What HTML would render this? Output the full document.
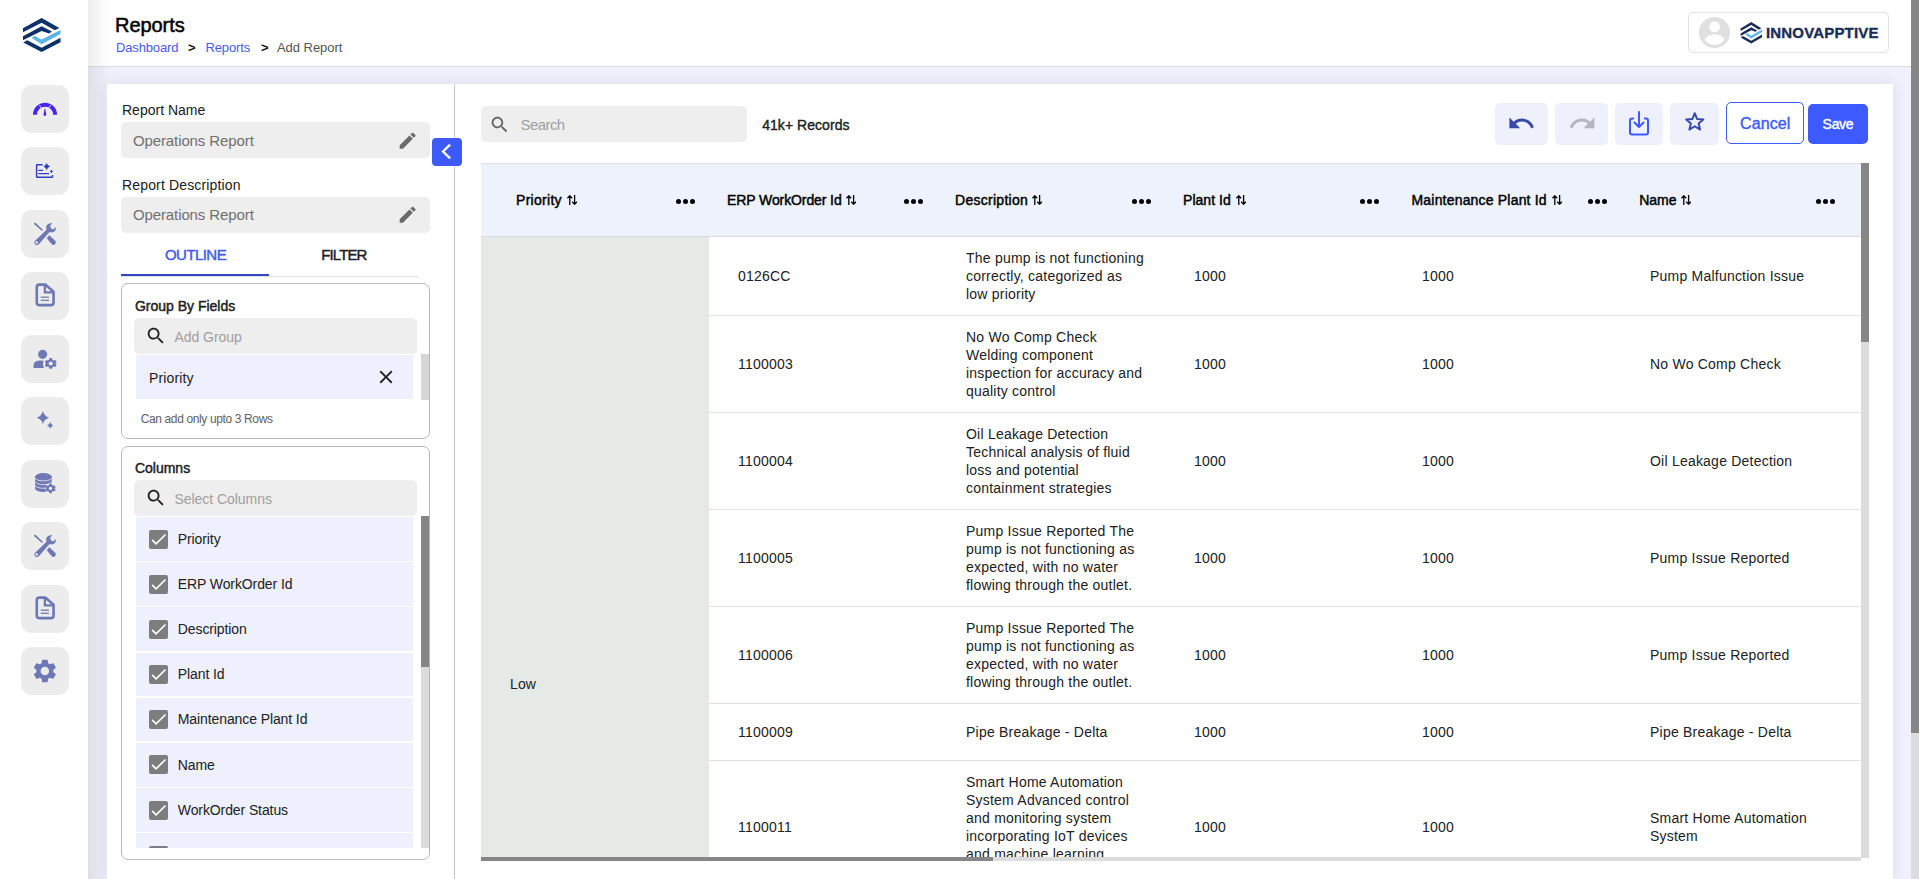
<!DOCTYPE html>
<html><head><meta charset="utf-8">
<style>
*{box-sizing:border-box;margin:0;padding:0}
html,body{width:1919px;height:879px;overflow:hidden;background:#fff;font-family:"Liberation Sans",sans-serif;color:#212121}
.a{position:absolute}
.t{position:absolute;white-space:nowrap;line-height:1}
.sb{position:absolute;left:21px;width:48px;height:48px;border-radius:11px;background:#ececec}
</style></head><body>
<div class="a" style="left:0px;top:0px;width:88px;height:879px;background:#fff"></div>
<svg class="a" style="left:15px;top:10px" width="55" height="50" viewBox="0 0 967 879">
  <polygon fill="#0d3269" points="140,320 468,140 780,315 700,355 468,225 140,390"/>
  <polygon fill="#0d3269" points="140,460 468,285 650,380 600,415 468,370 140,530"/>
  <polygon fill="#5bb3e6" points="290,490 350,455 468,520 800,350 800,420 468,600"/>
  <polygon fill="#0d3269" points="145,570 215,530 468,665 800,490 800,565 468,740"/>
</svg>
<div class="sb" style="top:85.00px"></div>
<svg class="a" style="left:20px;top:84.00px" width="50" height="50" viewBox="0 0 879 879"><path fill="#4b22f5" d="M228,540 A212,212 0 0 1 652,540 L582,540 A142,142 0 0 0 298,540 Z"/>
<line x1="342" y1="372" x2="372" y2="418" stroke="#f4f4ee" stroke-width="16"/>
<line x1="538" y1="372" x2="508" y2="418" stroke="#f4f4ee" stroke-width="16"/>
<path fill="#4b22f5" d="M433,430 L443,430 L462,538 A24,24 0 1 1 414,538 Z"/></svg>
<div class="sb" style="top:147.44px"></div>
<svg class="a" style="left:20px;top:146.44px" width="50" height="50" viewBox="0 0 879 879"><path fill="none" stroke="#2f3fc2" stroke-width="26" d="M400,330 L300,330 Q292,330 292,340 L292,540 Q292,548 300,548 L565,548 Q572,548 572,540 L572,510"/>
<line x1="330" y1="428" x2="395" y2="428" stroke="#2f3fc2" stroke-width="22" stroke-linecap="round"/>
<line x1="330" y1="484" x2="505" y2="484" stroke="#2f3fc2" stroke-width="22" stroke-linecap="round"/>
<path fill="#2f3fc2" d="M468,300 Q485,345 530,362 Q485,378 468,422 Q452,378 410,362 Q452,345 468,300 Z"/>
<path fill="#2f3fc2" d="M553,412 Q562,436 585,445 Q562,454 553,478 Q544,454 520,445 Q544,436 553,412 Z"/></svg>
<div class="sb" style="top:209.88px"></div>
<svg class="a" style="left:20px;top:208.88px" width="50" height="50" viewBox="0 0 879 879"><path fill="#6e78b4" d="M248,246 Q262,236 282,252 L335,302 L402,366 L386,386 L318,326 L262,282 Q240,262 248,246 Z"/>
<path fill="#6e78b4" d="M470,515 L515,460 L620,560 Q645,590 615,620 Q585,645 555,615 Z"/>
<path fill="#6e78b4" d="M565,245 Q500,240 465,290 Q450,330 470,360 L265,560 Q235,600 270,625 Q305,650 335,615 L520,405 Q560,420 600,400 Q640,370 632,315 L590,355 L545,345 L530,300 Z"/>
<circle cx="293" cy="590" r="22" fill="#ececec"/></svg>
<div class="sb" style="top:272.32px"></div>
<svg class="a" style="left:20px;top:271.32px" width="50" height="50" viewBox="0 0 879 879"><path fill="none" stroke="#6e78b4" stroke-width="46" stroke-linejoin="round" d="M340,240 L450,240 L590,365 L590,560 Q590,600 550,600 L335,600 Q295,600 295,560 L295,285 Q295,240 340,240 Z"/>
<path fill="none" stroke="#6e78b4" stroke-width="40" d="M437,245 L437,375 L585,375"/>
<line x1="365" y1="460" x2="510" y2="460" stroke="#6e78b4" stroke-width="22"/>
<line x1="365" y1="515" x2="510" y2="515" stroke="#6e78b4" stroke-width="22"/></svg>
<div class="sb" style="top:334.76px"></div>
<svg class="a" style="left:20px;top:333.76px" width="50" height="50" viewBox="0 0 879 879"><circle cx="398" cy="358" r="80" fill="#6e78b4"/>
<path fill="#6e78b4" d="M238,598 L238,560 Q238,490 310,472 Q360,462 418,470 Q400,500 405,540 Q410,575 425,598 Z"/>
<circle cx="540" cy="518" r="105" fill="#ececec"/>
<g transform="translate(540,518) scale(9.047619047619047)"><path fill="#6e78b4" d="M-2.5,-10.5 L2.5,-10.5 L3.2,-7.3 L5.9,-5.8 L9,-6.9 L11.5,-2.6 L9.1,-0.3 L9.1,0.3 L11.5,2.6 L9,6.9 L5.9,5.8 L3.2,7.3 L2.5,10.5 L-2.5,10.5 L-3.2,7.3 L-5.9,5.8 L-9,6.9 L-11.5,2.6 L-9.1,0.3 L-9.1,-0.3 L-11.5,-2.6 L-9,-6.9 L-5.9,-5.8 L-3.2,-7.3 Z"/><circle r="4" fill="#ececec"/></g></svg>
<div class="sb" style="top:397.20px"></div>
<svg class="a" style="left:20px;top:396.20px" width="50" height="50" viewBox="0 0 879 879"><path fill="#6e78b4" d="M403,265 Q425,355 512,382 Q425,405 403,495 Q380,405 293,382 Q380,355 403,265 Z"/>
<path fill="#6e78b4" d="M532,458 Q543,505 585,518 Q543,530 532,575 Q520,530 475,518 Q520,505 532,458 Z"/></svg>
<div class="sb" style="top:459.64px"></div>
<svg class="a" style="left:20px;top:458.64px" width="50" height="50" viewBox="0 0 879 879"><ellipse cx="412" cy="310" rx="148" ry="62" fill="#6e78b4"/>
<rect x="264" y="310" width="296" height="210" fill="#6e78b4"/>
<ellipse cx="412" cy="520" rx="148" ry="60" fill="#6e78b4"/>
<path fill="none" stroke="#ececec" stroke-width="14" d="M260,325 A152,60 0 0 0 564,325 M260,390 A152,60 0 0 0 564,390 M260,455 A152,60 0 0 0 564,455"/>
<circle cx="535" cy="517" r="95" fill="#ececec"/>
<g transform="translate(535,517) scale(8.095238095238095)"><path fill="#6e78b4" d="M-2.5,-10.5 L2.5,-10.5 L3.2,-7.3 L5.9,-5.8 L9,-6.9 L11.5,-2.6 L9.1,-0.3 L9.1,0.3 L11.5,2.6 L9,6.9 L5.9,5.8 L3.2,7.3 L2.5,10.5 L-2.5,10.5 L-3.2,7.3 L-5.9,5.8 L-9,6.9 L-11.5,2.6 L-9.1,0.3 L-9.1,-0.3 L-11.5,-2.6 L-9,-6.9 L-5.9,-5.8 L-3.2,-7.3 Z"/><circle r="3.6" fill="#ececec"/></g></svg>
<div class="sb" style="top:522.08px"></div>
<svg class="a" style="left:20px;top:521.08px" width="50" height="50" viewBox="0 0 879 879"><path fill="#6e78b4" d="M248,246 Q262,236 282,252 L335,302 L402,366 L386,386 L318,326 L262,282 Q240,262 248,246 Z"/>
<path fill="#6e78b4" d="M470,515 L515,460 L620,560 Q645,590 615,620 Q585,645 555,615 Z"/>
<path fill="#6e78b4" d="M565,245 Q500,240 465,290 Q450,330 470,360 L265,560 Q235,600 270,625 Q305,650 335,615 L520,405 Q560,420 600,400 Q640,370 632,315 L590,355 L545,345 L530,300 Z"/>
<circle cx="293" cy="590" r="22" fill="#ececec"/></svg>
<div class="sb" style="top:584.52px"></div>
<svg class="a" style="left:20px;top:583.52px" width="50" height="50" viewBox="0 0 879 879"><path fill="none" stroke="#6e78b4" stroke-width="46" stroke-linejoin="round" d="M340,240 L450,240 L590,365 L590,560 Q590,600 550,600 L335,600 Q295,600 295,560 L295,285 Q295,240 340,240 Z"/>
<path fill="none" stroke="#6e78b4" stroke-width="40" d="M437,245 L437,375 L585,375"/>
<line x1="365" y1="460" x2="510" y2="460" stroke="#6e78b4" stroke-width="22"/>
<line x1="365" y1="515" x2="510" y2="515" stroke="#6e78b4" stroke-width="22"/></svg>
<div class="sb" style="top:646.96px"></div>
<svg class="a" style="left:20px;top:645.96px" width="50" height="50" viewBox="0 0 879 879"><g transform="translate(190,192) scale(20.6)"><path fill="#6e78b4" d="M19.14 12.94c.04-.3.06-.61.06-.94 0-.32-.02-.64-.07-.94l2.03-1.58c.18-.14.23-.41.12-.61l-1.92-3.32c-.12-.22-.37-.29-.59-.22l-2.39.96c-.5-.38-1.03-.7-1.62-.94l-.36-2.54c-.04-.24-.24-.41-.48-.41h-3.84c-.24 0-.43.17-.47.41l-.36 2.54c-.59.24-1.13.57-1.62.94l-2.39-.96c-.22-.08-.47 0-.59.22L2.74 8.87c-.12.21-.08.47.12.61l2.03 1.58c-.05.3-.09.63-.09.94s.02.64.07.94l-2.03 1.58c-.18.14-.23.41-.12.61l1.92 3.32c.12.22.37.29.59.22l2.39-.96c.5.38 1.03.7 1.62.94l.36 2.54c.05.24.24.41.48.41h3.84c.24 0 .44-.17.47-.41l.36-2.54c.59-.24 1.13-.56 1.62-.94l2.39.96c.22.08.47 0 .59-.22l1.92-3.32c.12-.22.07-.47-.12-.61l-2.01-1.58zM12 15.6c-1.98 0-3.6-1.62-3.6-3.6s1.62-3.6 3.6-3.6 3.6 1.62 3.6 3.6-1.62 3.6-3.6 3.6z"/></g></svg>
<div class="a" style="left:88px;top:0px;width:1823px;height:67px;background:#fff;border-bottom:1px solid #dcdcdc"></div>
<div class="a" style="left:88px;top:67px;width:1823px;height:812px;background:#eff0fb"></div>
<div class="a" style="left:88px;top:0px;width:22px;height:879px;background:linear-gradient(to right,rgba(0,0,0,0.07),rgba(0,0,0,0))"></div>
<div class="t" style="left:115.00px;top:14.67px;font-size:20px;font-weight:400;color:#000;letter-spacing:-0.05px;-webkit-text-stroke:0.5px #000">Reports</div>
<div class="t" style="left:116.00px;top:40.70px;font-size:13px;font-weight:400;color:#4a5af0;letter-spacing:-0.15px;">Dashboard</div>
<div class="t" style="left:188.00px;top:40.70px;font-size:13px;font-weight:700;color:#111;letter-spacing:0px;">&gt;</div>
<div class="t" style="left:205.40px;top:40.70px;font-size:13px;font-weight:400;color:#4a5af0;letter-spacing:-0.1px;">Reports</div>
<div class="t" style="left:261.00px;top:40.70px;font-size:13px;font-weight:700;color:#111;letter-spacing:0px;">&gt;</div>
<div class="t" style="left:277.00px;top:40.70px;font-size:13px;font-weight:400;color:#555;letter-spacing:-0.05px;">Add Report</div>
<div class="a" style="left:1688px;top:12px;width:201px;height:41px;border:1px solid #e2e2e2;border-radius:5px;background:#fff"></div>
<svg class="a" style="left:1695px;top:13px" width="39" height="39" viewBox="0 0 24 24"><circle cx="12" cy="12" r="9.6" fill="#e0e0e0"/><circle cx="12" cy="8.6" r="3.3" fill="#fff"/><path fill="#fff" d="M6,16.6 C6.5,14.2 9.8,13.2 12,13.2 C14.2,13.2 17.5,14.2 18,16.6 C16.6,18.6 14.5,19.6 12,19.6 C9.5,19.6 7.4,18.6 6,16.6 Z"/></svg>
<svg class="a" style="left:1735.7px;top:17.1px" width="31.5" height="31.5" viewBox="0 0 967 879" preserveAspectRatio="none">
  <polygon fill="#1b2c55" points="140,320 468,140 780,315 700,355 468,225 140,390"/>
  <polygon fill="#1b2c55" points="140,460 468,285 650,380 600,415 468,370 140,530"/>
  <polygon fill="#5bb3e6" points="290,490 350,455 468,520 800,350 800,420 468,600"/>
  <polygon fill="#1b2c55" points="145,570 215,530 468,665 800,490 800,565 468,740"/>
</svg>
<div class="t" style="left:1766.00px;top:24.70px;font-size:15px;font-weight:700;color:#1b2c55;letter-spacing:0.17px;-webkit-text-stroke:0.35px #1b2c55">INNOVAPPTIVE</div>
<div class="a" style="left:1911px;top:0px;width:8px;height:879px;background:#dcdcdc"></div>
<div class="a" style="left:1911px;top:0px;width:8px;height:733px;background:#868686"></div>
<div class="a" style="left:107px;top:84px;width:1786px;height:795px;background:#fff;box-shadow:0 0 14px rgba(30,30,90,0.09)"></div>
<div class="a" style="left:454px;top:84px;width:1px;height:795px;background:#c8c8c8"></div>
<div class="t" style="left:122.00px;top:103.45px;font-size:14px;font-weight:400;color:#212121;letter-spacing:0px;">Report Name</div>
<div class="a" style="left:121px;top:122px;width:309px;height:36px;background:#eeeeee;border-radius:5px"></div>
<div class="t" style="left:132.90px;top:133.40px;font-size:15px;font-weight:400;color:#707070;letter-spacing:-0.1px;">Operations Report</div>
<svg class="a" style="left:397.40px;top:129.60px;" width="21.3" height="21.3" viewBox="0 0 24 24"><path fill="#6a6a6a" d="M3 17.25V21h3.75L17.81 9.94l-3.75-3.75L3 17.25zM20.71 7.04c.39-.39.39-1.02 0-1.41l-2.34-2.34c-.39-.39-1.02-.39-1.41 0l-1.83 1.83 3.75 3.75 1.83-1.83z"/></svg>
<div class="t" style="left:122.00px;top:177.85px;font-size:14px;font-weight:400;color:#212121;letter-spacing:0.15px;">Report Description</div>
<div class="a" style="left:121px;top:197px;width:309px;height:36px;background:#eeeeee;border-radius:5px"></div>
<div class="t" style="left:132.90px;top:207.40px;font-size:15px;font-weight:400;color:#707070;letter-spacing:-0.1px;">Operations Report</div>
<svg class="a" style="left:397.40px;top:203.90px;" width="21.3" height="21.3" viewBox="0 0 24 24"><path fill="#6a6a6a" d="M3 17.25V21h3.75L17.81 9.94l-3.75-3.75L3 17.25zM20.71 7.04c.39-.39.39-1.02 0-1.41l-2.34-2.34c-.39-.39-1.02-.39-1.41 0l-1.83 1.83 3.75 3.75 1.83-1.83z"/></svg>
<div class="a" style="left:432px;top:138px;width:30px;height:28px;background:#3d5afe;border-radius:4px"></div>
<svg class="a" style="left:435px;top:140px" width="24" height="24" viewBox="0 0 24 24"><path fill="none" stroke="#fff" stroke-width="2.3" d="M15.1,4.6 L8,11.5 L15.1,18.4"/></svg>
<div class="t" style="left:165.00px;top:246.90px;font-size:15px;font-weight:400;color:#4458f0;letter-spacing:-0.56px;-webkit-text-stroke:0.45px #4458f0">OUTLINE</div>
<div class="t" style="left:321.20px;top:246.90px;font-size:15px;font-weight:400;color:#1f1f1f;letter-spacing:-0.87px;-webkit-text-stroke:0.45px #1f1f1f">FILTER</div>
<div class="a" style="left:121px;top:276px;width:297px;height:1px;background:#e0e0e0"></div>
<div class="a" style="left:121px;top:274px;width:148px;height:2px;background:#3446c6"></div>
<div class="a" style="left:121px;top:283px;width:309px;height:156px;border:1px solid #b8b8b8;border-radius:7px"></div>
<div class="t" style="left:134.90px;top:298.85px;font-size:14px;font-weight:400;color:#212121;letter-spacing:0px;-webkit-text-stroke:0.45px #212121">Group By Fields</div>
<div class="a" style="left:134px;top:318px;width:283px;height:36px;background:#eeeeee;border-radius:5px"></div>
<svg class="a" style="left:145.30px;top:324.50px;" width="21.8" height="21.8" viewBox="0 0 24 24"><path fill="#212121" d="M15.5 14h-.79l-.28-.27C15.41 12.59 16 11.11 16 9.5 16 5.91 13.09 3 9.5 3S3 5.91 3 9.5 5.91 16 9.5 16c1.61 0 3.09-.59 4.23-1.57l.27.28v.79l5 4.99L20.49 19l-4.99-5zm-6 0C7.01 14 5 11.99 5 9.5S7.01 5 9.5 5 14 7.01 14 9.5 11.99 14 9.5 14z"/></svg>
<div class="t" style="left:174.50px;top:329.85px;font-size:14px;font-weight:400;color:#9e9e9e;letter-spacing:-0.05px;">Add Group</div>
<div class="a" style="left:136px;top:355px;width:277px;height:44px;background:#eef0fd"></div>
<div class="t" style="left:148.90px;top:371.15px;font-size:14px;font-weight:400;color:#212121;letter-spacing:0.15px;">Priority</div>
<svg class="a" style="left:374.60px;top:366.40px;" width="22" height="22" viewBox="0 0 24 24"><path fill="#212121" d="M19 6.41L17.59 5 12 10.59 6.41 5 5 6.41 10.59 12 5 17.59 6.41 19 12 13.41 17.59 19 19 17.59 13.41 12z"/></svg>
<div class="a" style="left:421px;top:354px;width:8px;height:46px;background:#d6d6d6"></div>
<div class="t" style="left:140.70px;top:412.54px;font-size:12px;font-weight:400;color:#616161;letter-spacing:-0.37px;">Can add only upto 3 Rows</div>
<div class="a" style="left:121px;top:446px;width:309px;height:414px;border:1px solid #b8b8b8;border-radius:7px"></div>
<div class="t" style="left:134.90px;top:461.05px;font-size:14px;font-weight:400;color:#212121;letter-spacing:0px;-webkit-text-stroke:0.45px #212121">Columns</div>
<div class="a" style="left:134px;top:480px;width:283px;height:36px;background:#eeeeee;border-radius:5px"></div>
<svg class="a" style="left:145.30px;top:486.50px;" width="21.8" height="21.8" viewBox="0 0 24 24"><path fill="#212121" d="M15.5 14h-.79l-.28-.27C15.41 12.59 16 11.11 16 9.5 16 5.91 13.09 3 9.5 3S3 5.91 3 9.5 5.91 16 9.5 16c1.61 0 3.09-.59 4.23-1.57l.27.28v.79l5 4.99L20.49 19l-4.99-5zm-6 0C7.01 14 5 11.99 5 9.5S7.01 5 9.5 5 14 7.01 14 9.5 11.99 14 9.5 14z"/></svg>
<div class="t" style="left:174.50px;top:492.15px;font-size:14px;font-weight:400;color:#9e9e9e;letter-spacing:-0.05px;">Select Columns</div>
<div class="a" style="left:136px;top:516px;width:277px;height:332px;overflow:hidden">
<div class="a" style="left:0;top:1.00px;width:277px;height:43.7px;background:#eef0fd"></div>
<div class="a" style="left:13px;top:13.50px;width:19px;height:19px;background:#7d7d7d;border-radius:2px"></div>
<svg class="a" style="left:13px;top:13.50px" width="19" height="19" viewBox="0 0 19 19"><path fill="none" stroke="#fff" stroke-width="1.7" stroke-linecap="round" d="M3.6,10.4 L7.1,13.8 L16,5"/></svg>
<div class="t" style="left:41.8px;top:15.75px;font-size:14px;color:#212121;letter-spacing:-0.1px">Priority</div>
<div class="a" style="left:0;top:46.17px;width:277px;height:43.7px;background:#eef0fd"></div>
<div class="a" style="left:13px;top:58.67px;width:19px;height:19px;background:#7d7d7d;border-radius:2px"></div>
<svg class="a" style="left:13px;top:58.67px" width="19" height="19" viewBox="0 0 19 19"><path fill="none" stroke="#fff" stroke-width="1.7" stroke-linecap="round" d="M3.6,10.4 L7.1,13.8 L16,5"/></svg>
<div class="t" style="left:41.8px;top:60.92px;font-size:14px;color:#212121;letter-spacing:-0.1px">ERP WorkOrder Id</div>
<div class="a" style="left:0;top:91.34px;width:277px;height:43.7px;background:#eef0fd"></div>
<div class="a" style="left:13px;top:103.84px;width:19px;height:19px;background:#7d7d7d;border-radius:2px"></div>
<svg class="a" style="left:13px;top:103.84px" width="19" height="19" viewBox="0 0 19 19"><path fill="none" stroke="#fff" stroke-width="1.7" stroke-linecap="round" d="M3.6,10.4 L7.1,13.8 L16,5"/></svg>
<div class="t" style="left:41.8px;top:106.09px;font-size:14px;color:#212121;letter-spacing:-0.1px">Description</div>
<div class="a" style="left:0;top:136.51px;width:277px;height:43.7px;background:#eef0fd"></div>
<div class="a" style="left:13px;top:149.01px;width:19px;height:19px;background:#7d7d7d;border-radius:2px"></div>
<svg class="a" style="left:13px;top:149.01px" width="19" height="19" viewBox="0 0 19 19"><path fill="none" stroke="#fff" stroke-width="1.7" stroke-linecap="round" d="M3.6,10.4 L7.1,13.8 L16,5"/></svg>
<div class="t" style="left:41.8px;top:151.26px;font-size:14px;color:#212121;letter-spacing:-0.1px">Plant Id</div>
<div class="a" style="left:0;top:181.68px;width:277px;height:43.7px;background:#eef0fd"></div>
<div class="a" style="left:13px;top:194.18px;width:19px;height:19px;background:#7d7d7d;border-radius:2px"></div>
<svg class="a" style="left:13px;top:194.18px" width="19" height="19" viewBox="0 0 19 19"><path fill="none" stroke="#fff" stroke-width="1.7" stroke-linecap="round" d="M3.6,10.4 L7.1,13.8 L16,5"/></svg>
<div class="t" style="left:41.8px;top:196.43px;font-size:14px;color:#212121;letter-spacing:-0.1px">Maintenance Plant Id</div>
<div class="a" style="left:0;top:226.85px;width:277px;height:43.7px;background:#eef0fd"></div>
<div class="a" style="left:13px;top:239.35px;width:19px;height:19px;background:#7d7d7d;border-radius:2px"></div>
<svg class="a" style="left:13px;top:239.35px" width="19" height="19" viewBox="0 0 19 19"><path fill="none" stroke="#fff" stroke-width="1.7" stroke-linecap="round" d="M3.6,10.4 L7.1,13.8 L16,5"/></svg>
<div class="t" style="left:41.8px;top:241.60px;font-size:14px;color:#212121;letter-spacing:-0.1px">Name</div>
<div class="a" style="left:0;top:272.02px;width:277px;height:43.7px;background:#eef0fd"></div>
<div class="a" style="left:13px;top:284.52px;width:19px;height:19px;background:#7d7d7d;border-radius:2px"></div>
<svg class="a" style="left:13px;top:284.52px" width="19" height="19" viewBox="0 0 19 19"><path fill="none" stroke="#fff" stroke-width="1.7" stroke-linecap="round" d="M3.6,10.4 L7.1,13.8 L16,5"/></svg>
<div class="t" style="left:41.8px;top:286.77px;font-size:14px;color:#212121;letter-spacing:-0.1px">WorkOrder Status</div>
<div class="a" style="left:0;top:317.19px;width:277px;height:43.7px;background:#eef0fd"></div>
<div class="a" style="left:13px;top:329.69px;width:19px;height:19px;background:#7d7d7d;border-radius:2px"></div>
<svg class="a" style="left:13px;top:329.69px" width="19" height="19" viewBox="0 0 19 19"><path fill="none" stroke="#fff" stroke-width="1.7" stroke-linecap="round" d="M3.6,10.4 L7.1,13.8 L16,5"/></svg>
<div class="t" style="left:41.8px;top:331.94px;font-size:14px;color:#212121;letter-spacing:-0.1px">WorkOrder Type</div>
</div>
<div class="a" style="left:421px;top:516px;width:8px;height:332px;background:#dcdcdc"></div>
<div class="a" style="left:421px;top:516px;width:8px;height:151px;background:#858585"></div>
<div class="a" style="left:481px;top:106px;width:266px;height:36px;background:#eeeeee;border-radius:5px"></div>
<svg class="a" style="left:489.30px;top:114.00px;" width="21.3" height="21.3" viewBox="0 0 24 24"><path fill="#616161" d="M15.5 14h-.79l-.28-.27C15.41 12.59 16 11.11 16 9.5 16 5.91 13.09 3 9.5 3S3 5.91 3 9.5 5.91 16 9.5 16c1.61 0 3.09-.59 4.23-1.57l.27.28v.79l5 4.99L20.49 19l-4.99-5zm-6 0C7.01 14 5 11.99 5 9.5S7.01 5 9.5 5 14 7.01 14 9.5 11.99 14 9.5 14z"/></svg>
<div class="t" style="left:520.60px;top:117.20px;font-size:15px;font-weight:400;color:#9e9e9e;letter-spacing:-0.6px;">Search</div>
<div class="t" style="left:762.20px;top:117.95px;font-size:14px;font-weight:400;color:#212121;letter-spacing:0.05px;-webkit-text-stroke:0.4px #212121">41k+ Records</div>
<div class="a" style="left:1495px;top:103px;width:53px;height:42px;background:#eef0fc;border-radius:5px"></div>
<div class="a" style="left:1555px;top:103px;width:53px;height:42px;background:#eef0fc;border-radius:5px"></div>
<div class="a" style="left:1615px;top:103px;width:48px;height:42px;background:#eef0fc;border-radius:5px"></div>
<div class="a" style="left:1670px;top:103px;width:49px;height:42px;background:#eef0fc;border-radius:5px"></div>
<svg class="a" style="left:1507.00px;top:109.30px;" width="28.8" height="28.8" viewBox="0 0 24 24"><path fill="#3949ab" d="M12.5 8c-2.65 0-5.05.99-6.9 2.6L2 7v9h9l-3.62-3.62c1.39-1.16 3.16-1.88 5.12-1.88 3.54 0 6.55 2.31 7.6 5.5l2.37-.78C21.08 11.03 17.15 8 12.5 8z"/></svg>
<svg class="a" style="left:1567.50px;top:109.30px;" width="28.8" height="28.8" viewBox="0 0 24 24"><path fill="#b3b5bf" d="M18.4 10.6C16.55 8.99 14.15 8 11.5 8c-4.65 0-8.58 3.03-9.96 7.22L3.9 16c1.05-3.19 4.05-5.5 7.6-5.5 1.95 0 3.73.72 5.12 1.88L13 16h9V7l-3.6 3.6z"/></svg>
<svg class="a" style="left:1627px;top:110px" width="24" height="26" viewBox="0 0 24 26"><path fill="none" stroke="#3d5afe" stroke-width="2" stroke-linejoin="round" d="M7,8.5 L5,8.5 Q3,8.5 3,10.5 L3,22.5 Q3,24.5 5,24.5 L19,24.5 Q21,24.5 21,22.5 L21,10.5 Q21,8.5 19,8.5 L17,8.5"/><path fill="none" stroke="#3d5afe" stroke-width="2" stroke-linecap="round" stroke-linejoin="round" d="M12,2 L12,17 M7.5,12.5 L12,17 L16.5,12.5"/></svg>
<svg class="a" style="left:1683.8px;top:110.8px" width="21.5" height="21.5" viewBox="0 0 24 24"><path fill="none" stroke="#3949ab" stroke-width="2.2" stroke-linejoin="round" d="M12,2.5 L14.7,9 L21.6,9.4 L16.3,13.9 L18,20.7 L12,17 L6,20.7 L7.7,13.9 L2.4,9.4 L9.3,9 Z"/></svg>
<div class="a" style="left:1726px;top:102px;width:78px;height:42px;border:1px solid #3d5afe;border-radius:5px;background:#fff"></div>
<div class="t" style="left:1740.00px;top:115.86px;font-size:16px;font-weight:400;color:#3d5afe;letter-spacing:0.1px;-webkit-text-stroke:0.4px #3d5afe">Cancel</div>
<div class="a" style="left:1808px;top:104px;width:60px;height:40px;background:#3d5afe;border-radius:5px"></div>
<div class="t" style="left:1822.60px;top:116.95px;font-size:14px;font-weight:400;color:#fff;letter-spacing:-0.3px;-webkit-text-stroke:0.4px #fff">Save</div>
<div class="a" style="left:481px;top:163px;width:1380px;height:1px;background:#dedede"></div>
<div class="a" style="left:481px;top:164px;width:1380px;height:72px;background:#eef2fd"></div>
<div class="a" style="left:481px;top:236px;width:1380px;height:1px;background:#dcdcdc"></div>
<div class="a" style="left:481px;top:237px;width:228px;height:620px;background:#e6eae6"></div>
<div class="t" style="left:516.00px;top:193.15px;font-size:14px;font-weight:400;color:#000;letter-spacing:0.29px;-webkit-text-stroke:0.45px #000">Priority</div>
<svg class="a" style="left:566.50px;top:195px" width="10" height="10" viewBox="0 0 10 10"><path fill="none" stroke="#000" stroke-width="1.3" d="M2.8,10 L2.8,0.8 M0.4,3.2 L2.8,0.8 L5.2,3.2 M7.6,0 L7.6,9.2 M5.2,6.8 L7.6,9.2 L10,6.8"/></svg>
<div class="a" style="left:675.50px;top:198.8px;width:5.3px;height:5.3px;border-radius:50%;background:#000"></div>
<div class="a" style="left:682.60px;top:198.8px;width:5.3px;height:5.3px;border-radius:50%;background:#000"></div>
<div class="a" style="left:689.70px;top:198.8px;width:5.3px;height:5.3px;border-radius:50%;background:#000"></div>
<div class="t" style="left:727.00px;top:193.15px;font-size:14px;font-weight:400;color:#000;letter-spacing:-0.1px;-webkit-text-stroke:0.45px #000">ERP WorkOrder Id</div>
<svg class="a" style="left:846.00px;top:195px" width="10" height="10" viewBox="0 0 10 10"><path fill="none" stroke="#000" stroke-width="1.3" d="M2.8,10 L2.8,0.8 M0.4,3.2 L2.8,0.8 L5.2,3.2 M7.6,0 L7.6,9.2 M5.2,6.8 L7.6,9.2 L10,6.8"/></svg>
<div class="a" style="left:903.50px;top:198.8px;width:5.3px;height:5.3px;border-radius:50%;background:#000"></div>
<div class="a" style="left:910.60px;top:198.8px;width:5.3px;height:5.3px;border-radius:50%;background:#000"></div>
<div class="a" style="left:917.70px;top:198.8px;width:5.3px;height:5.3px;border-radius:50%;background:#000"></div>
<div class="t" style="left:955.00px;top:193.15px;font-size:14px;font-weight:400;color:#000;letter-spacing:0.28px;-webkit-text-stroke:0.45px #000">Description</div>
<svg class="a" style="left:1032.30px;top:195px" width="10" height="10" viewBox="0 0 10 10"><path fill="none" stroke="#000" stroke-width="1.3" d="M2.8,10 L2.8,0.8 M0.4,3.2 L2.8,0.8 L5.2,3.2 M7.6,0 L7.6,9.2 M5.2,6.8 L7.6,9.2 L10,6.8"/></svg>
<div class="a" style="left:1131.50px;top:198.8px;width:5.3px;height:5.3px;border-radius:50%;background:#000"></div>
<div class="a" style="left:1138.60px;top:198.8px;width:5.3px;height:5.3px;border-radius:50%;background:#000"></div>
<div class="a" style="left:1145.70px;top:198.8px;width:5.3px;height:5.3px;border-radius:50%;background:#000"></div>
<div class="t" style="left:1183.00px;top:193.15px;font-size:14px;font-weight:400;color:#000;letter-spacing:0.04px;-webkit-text-stroke:0.45px #000">Plant Id</div>
<svg class="a" style="left:1236.30px;top:195px" width="10" height="10" viewBox="0 0 10 10"><path fill="none" stroke="#000" stroke-width="1.3" d="M2.8,10 L2.8,0.8 M0.4,3.2 L2.8,0.8 L5.2,3.2 M7.6,0 L7.6,9.2 M5.2,6.8 L7.6,9.2 L10,6.8"/></svg>
<div class="a" style="left:1359.50px;top:198.8px;width:5.3px;height:5.3px;border-radius:50%;background:#000"></div>
<div class="a" style="left:1366.60px;top:198.8px;width:5.3px;height:5.3px;border-radius:50%;background:#000"></div>
<div class="a" style="left:1373.70px;top:198.8px;width:5.3px;height:5.3px;border-radius:50%;background:#000"></div>
<div class="t" style="left:1411.50px;top:193.15px;font-size:14px;font-weight:400;color:#000;letter-spacing:0.19px;-webkit-text-stroke:0.45px #000">Maintenance Plant Id</div>
<svg class="a" style="left:1551.50px;top:195px" width="10" height="10" viewBox="0 0 10 10"><path fill="none" stroke="#000" stroke-width="1.3" d="M2.8,10 L2.8,0.8 M0.4,3.2 L2.8,0.8 L5.2,3.2 M7.6,0 L7.6,9.2 M5.2,6.8 L7.6,9.2 L10,6.8"/></svg>
<div class="a" style="left:1587.50px;top:198.8px;width:5.3px;height:5.3px;border-radius:50%;background:#000"></div>
<div class="a" style="left:1594.60px;top:198.8px;width:5.3px;height:5.3px;border-radius:50%;background:#000"></div>
<div class="a" style="left:1601.70px;top:198.8px;width:5.3px;height:5.3px;border-radius:50%;background:#000"></div>
<div class="t" style="left:1639.20px;top:193.15px;font-size:14px;font-weight:400;color:#000;letter-spacing:0px;-webkit-text-stroke:0.45px #000">Name</div>
<svg class="a" style="left:1680.90px;top:195px" width="10" height="10" viewBox="0 0 10 10"><path fill="none" stroke="#000" stroke-width="1.3" d="M2.8,10 L2.8,0.8 M0.4,3.2 L2.8,0.8 L5.2,3.2 M7.6,0 L7.6,9.2 M5.2,6.8 L7.6,9.2 L10,6.8"/></svg>
<div class="a" style="left:1815.50px;top:198.8px;width:5.3px;height:5.3px;border-radius:50%;background:#000"></div>
<div class="a" style="left:1822.60px;top:198.8px;width:5.3px;height:5.3px;border-radius:50%;background:#000"></div>
<div class="a" style="left:1829.70px;top:198.8px;width:5.3px;height:5.3px;border-radius:50%;background:#000"></div>
<div class="a" style="left:709px;top:237px;width:1152px;height:620px;overflow:hidden">
<div class="a" style="left:0;top:78px;width:1152px;height:1px;background:#e0e0e0"></div>
<div class="a" style="left:29px;top:30.00px;line-height:18px;font-size:14px;color:#212121;letter-spacing:0.22px;white-space:nowrap">0126CC</div>
<div class="a" style="left:257px;top:12.00px;line-height:18px;font-size:14px;color:#212121;letter-spacing:0.22px;white-space:nowrap">The pump is not functioning<br>correctly, categorized as<br>low priority</div>
<div class="a" style="left:485px;top:30.00px;line-height:18px;font-size:14px;color:#212121;letter-spacing:0.22px;white-space:nowrap">1000</div>
<div class="a" style="left:713px;top:30.00px;line-height:18px;font-size:14px;color:#212121;letter-spacing:0.22px;white-space:nowrap">1000</div>
<div class="a" style="left:941px;top:30.00px;line-height:18px;font-size:14px;color:#212121;letter-spacing:0.22px;white-space:nowrap">Pump Malfunction Issue</div>
<div class="a" style="left:0;top:175px;width:1152px;height:1px;background:#e0e0e0"></div>
<div class="a" style="left:29px;top:118.00px;line-height:18px;font-size:14px;color:#212121;letter-spacing:0.22px;white-space:nowrap">1100003</div>
<div class="a" style="left:257px;top:91.00px;line-height:18px;font-size:14px;color:#212121;letter-spacing:0.22px;white-space:nowrap">No Wo Comp Check<br>Welding component<br>inspection for accuracy and<br>quality control</div>
<div class="a" style="left:485px;top:118.00px;line-height:18px;font-size:14px;color:#212121;letter-spacing:0.22px;white-space:nowrap">1000</div>
<div class="a" style="left:713px;top:118.00px;line-height:18px;font-size:14px;color:#212121;letter-spacing:0.22px;white-space:nowrap">1000</div>
<div class="a" style="left:941px;top:118.00px;line-height:18px;font-size:14px;color:#212121;letter-spacing:0.22px;white-space:nowrap">No Wo Comp Check</div>
<div class="a" style="left:0;top:272px;width:1152px;height:1px;background:#e0e0e0"></div>
<div class="a" style="left:29px;top:215.00px;line-height:18px;font-size:14px;color:#212121;letter-spacing:0.22px;white-space:nowrap">1100004</div>
<div class="a" style="left:257px;top:188.00px;line-height:18px;font-size:14px;color:#212121;letter-spacing:0.22px;white-space:nowrap">Oil Leakage Detection<br>Technical analysis of fluid<br>loss and potential<br>containment strategies</div>
<div class="a" style="left:485px;top:215.00px;line-height:18px;font-size:14px;color:#212121;letter-spacing:0.22px;white-space:nowrap">1000</div>
<div class="a" style="left:713px;top:215.00px;line-height:18px;font-size:14px;color:#212121;letter-spacing:0.22px;white-space:nowrap">1000</div>
<div class="a" style="left:941px;top:215.00px;line-height:18px;font-size:14px;color:#212121;letter-spacing:0.22px;white-space:nowrap">Oil Leakage Detection</div>
<div class="a" style="left:0;top:369px;width:1152px;height:1px;background:#e0e0e0"></div>
<div class="a" style="left:29px;top:312.00px;line-height:18px;font-size:14px;color:#212121;letter-spacing:0.22px;white-space:nowrap">1100005</div>
<div class="a" style="left:257px;top:285.00px;line-height:18px;font-size:14px;color:#212121;letter-spacing:0.22px;white-space:nowrap">Pump Issue Reported The<br>pump is not functioning as<br>expected, with no water<br>flowing through the outlet.</div>
<div class="a" style="left:485px;top:312.00px;line-height:18px;font-size:14px;color:#212121;letter-spacing:0.22px;white-space:nowrap">1000</div>
<div class="a" style="left:713px;top:312.00px;line-height:18px;font-size:14px;color:#212121;letter-spacing:0.22px;white-space:nowrap">1000</div>
<div class="a" style="left:941px;top:312.00px;line-height:18px;font-size:14px;color:#212121;letter-spacing:0.22px;white-space:nowrap">Pump Issue Reported</div>
<div class="a" style="left:0;top:466px;width:1152px;height:1px;background:#e0e0e0"></div>
<div class="a" style="left:29px;top:409.00px;line-height:18px;font-size:14px;color:#212121;letter-spacing:0.22px;white-space:nowrap">1100006</div>
<div class="a" style="left:257px;top:382.00px;line-height:18px;font-size:14px;color:#212121;letter-spacing:0.22px;white-space:nowrap">Pump Issue Reported The<br>pump is not functioning as<br>expected, with no water<br>flowing through the outlet.</div>
<div class="a" style="left:485px;top:409.00px;line-height:18px;font-size:14px;color:#212121;letter-spacing:0.22px;white-space:nowrap">1000</div>
<div class="a" style="left:713px;top:409.00px;line-height:18px;font-size:14px;color:#212121;letter-spacing:0.22px;white-space:nowrap">1000</div>
<div class="a" style="left:941px;top:409.00px;line-height:18px;font-size:14px;color:#212121;letter-spacing:0.22px;white-space:nowrap">Pump Issue Reported</div>
<div class="a" style="left:0;top:523px;width:1152px;height:1px;background:#e0e0e0"></div>
<div class="a" style="left:29px;top:486.00px;line-height:18px;font-size:14px;color:#212121;letter-spacing:0.22px;white-space:nowrap">1100009</div>
<div class="a" style="left:257px;top:486.00px;line-height:18px;font-size:14px;color:#212121;letter-spacing:0.22px;white-space:nowrap">Pipe Breakage - Delta</div>
<div class="a" style="left:485px;top:486.00px;line-height:18px;font-size:14px;color:#212121;letter-spacing:0.22px;white-space:nowrap">1000</div>
<div class="a" style="left:713px;top:486.00px;line-height:18px;font-size:14px;color:#212121;letter-spacing:0.22px;white-space:nowrap">1000</div>
<div class="a" style="left:941px;top:486.00px;line-height:18px;font-size:14px;color:#212121;letter-spacing:0.22px;white-space:nowrap">Pipe Breakage - Delta</div>
<div class="a" style="left:29px;top:581.00px;line-height:18px;font-size:14px;color:#212121;letter-spacing:0.22px;white-space:nowrap">1100011</div>
<div class="a" style="left:257px;top:536.00px;line-height:18px;font-size:14px;color:#212121;letter-spacing:0.22px;white-space:nowrap">Smart Home Automation<br>System Advanced control<br>and monitoring system<br>incorporating IoT devices<br>and machine learning<br>algorithms</div>
<div class="a" style="left:485px;top:581.00px;line-height:18px;font-size:14px;color:#212121;letter-spacing:0.22px;white-space:nowrap">1000</div>
<div class="a" style="left:713px;top:581.00px;line-height:18px;font-size:14px;color:#212121;letter-spacing:0.22px;white-space:nowrap">1000</div>
<div class="a" style="left:941px;top:572.00px;line-height:18px;font-size:14px;color:#212121;letter-spacing:0.22px;white-space:nowrap">Smart Home Automation<br>System</div>
</div>
<div class="t" style="left:510.00px;top:677.35px;font-size:14px;font-weight:400;color:#212121;letter-spacing:0.1px;">Low</div>
<div class="a" style="left:1861px;top:163px;width:8px;height:695px;background:#dcdcdc"></div>
<div class="a" style="left:1861px;top:163px;width:8px;height:179px;background:#868686"></div>
<div class="a" style="left:481px;top:857px;width:1380px;height:4px;background:#dcdcdc"></div>
<div class="a" style="left:481px;top:857px;width:512px;height:4px;background:#868686"></div>
</body></html>
